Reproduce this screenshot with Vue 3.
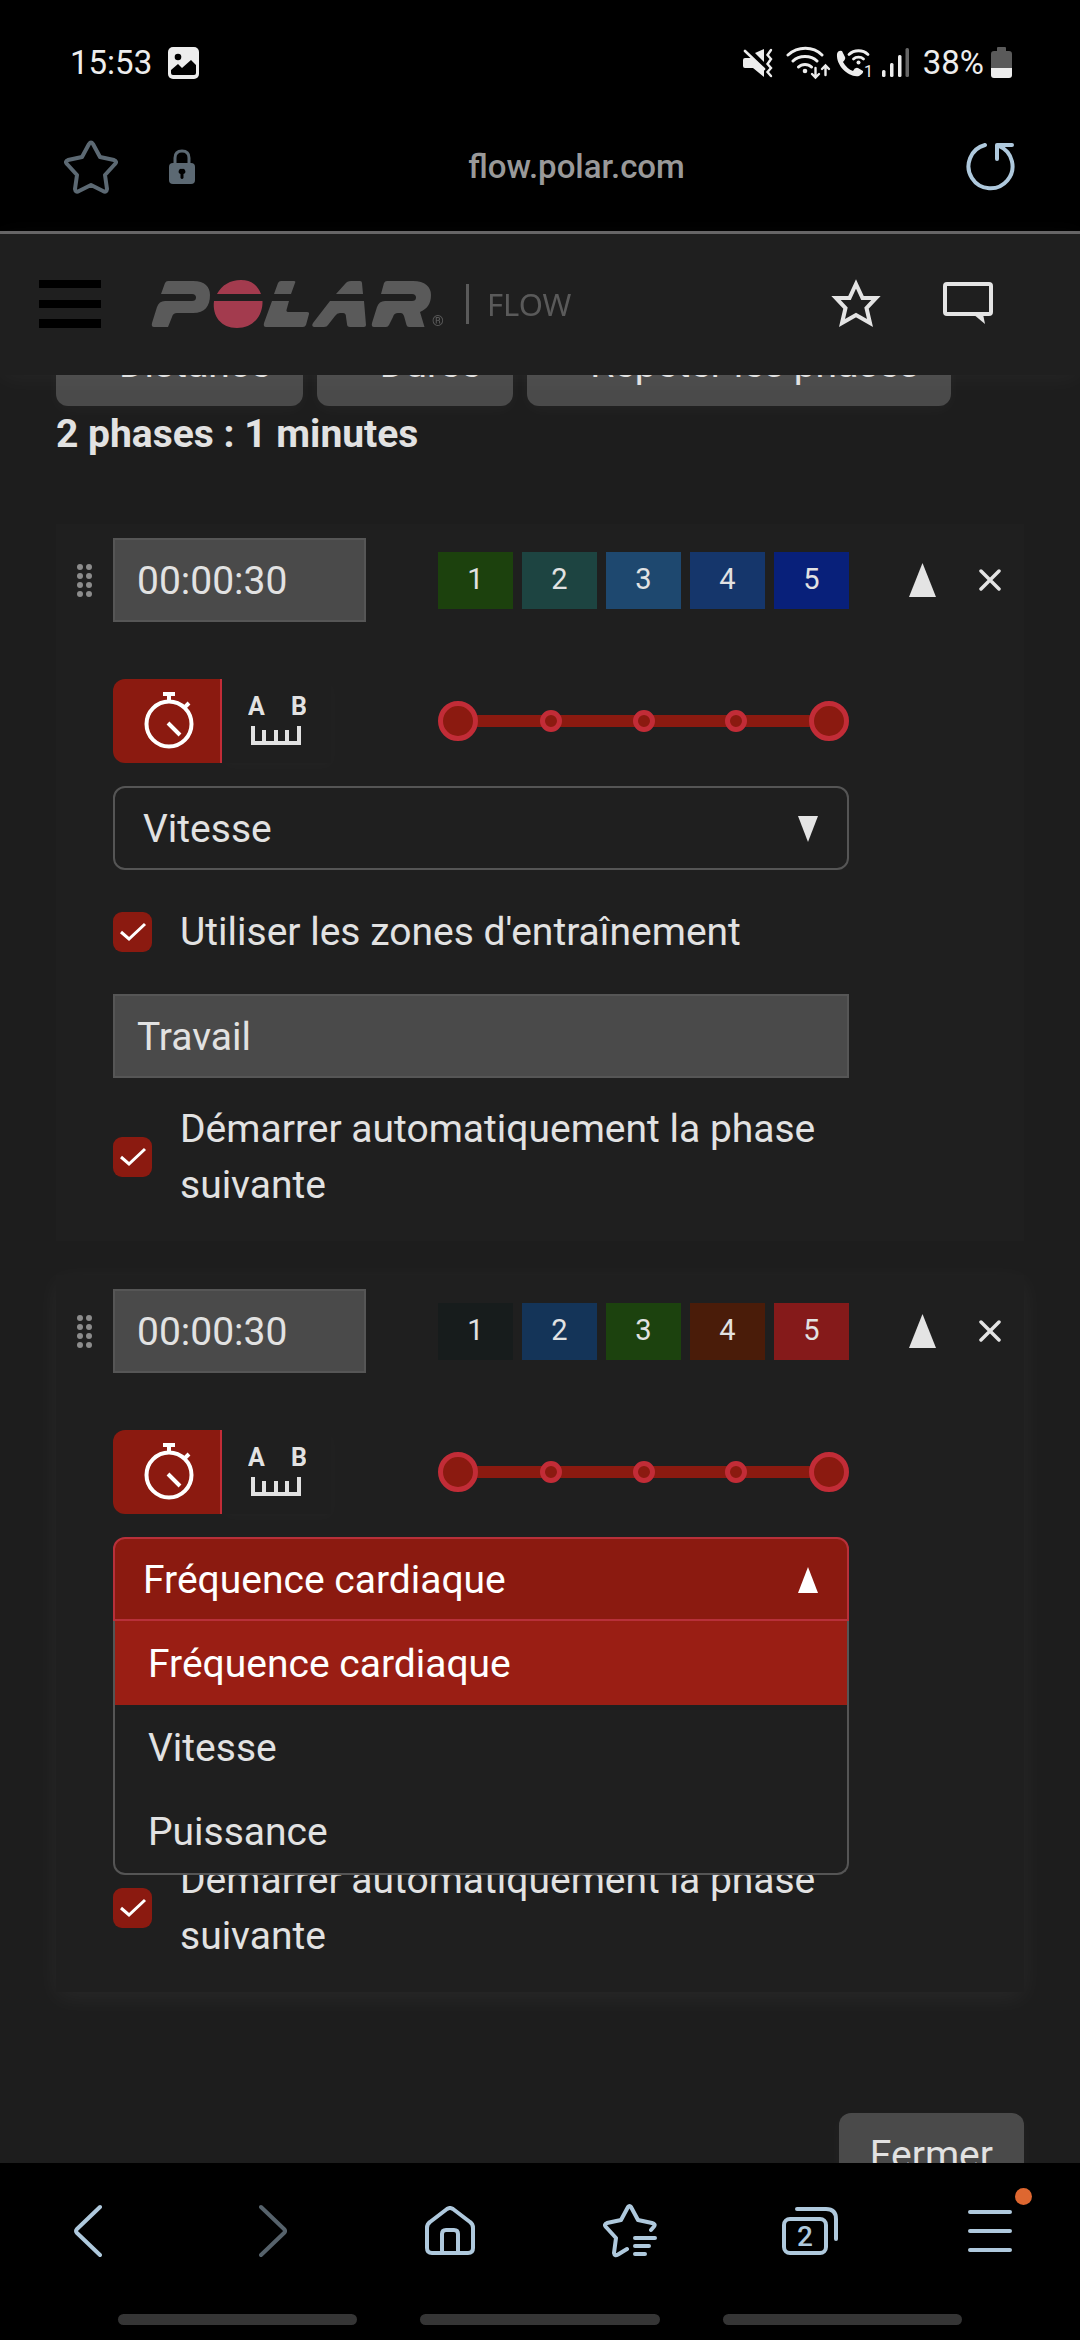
<script setup>
import { onMounted, reactive, ref } from 'vue'

const phaseTypes = ['Fréquence cardiaque', 'Vitesse', 'Puissance']
const addButtons = ['Distance', 'Durée', 'Répéter les phases']

const phases = reactive([
  {
    id: 1,
    duration: '00:00:30',
    name: 'Travail',
    type: 'Vitesse',
    open: false,
    zones: ['#1c410d', '#1d4441', '#1e486f', '#15366b', '#08207a'],
  },
  {
    id: 2,
    duration: '00:00:30',
    name: '',
    type: 'Fréquence cardiaque',
    open: true,
    zones: ['#171c1c', '#143458', '#1c420e', '#4a1c09', '#851a1a'],
  },
])

const scroller = ref(null)
onMounted(() => {
  scroller.value.scrollTop = 53
})
</script>

<template>
  <div class="screen">
    <div class="status">
      <span class="clock">15:53</span>
      <svg class="shot" width="31" height="32" viewBox="0 0 31 32">
        <rect width="31" height="32" rx="5" fill="#ededed" />
        <circle cx="10" cy="10" r="3.3" fill="#000" />
        <path d="M3 23L10 17L14 21L23 13L28 18V26Q28 28 26 28H5Q3 28 3 26Z" fill="#000" />
      </svg>
      <div class="indicators">
        <svg width="30" height="34" viewBox="0 0 30 34" fill="#ededed">
          <path d="M2 12H10L21 23V31L10 22H2Q0 22 0 20V14Q0 12 2 12ZM12 7L21 3V16Z" />
          <path d="M2 5L21 23" stroke="#ededed" stroke-width="2.6" stroke-linecap="round" />
          <path d="M28 4L24.500 9L28 13L24.500 18L28 22L24.500 26L28 30" fill="none" stroke="#ededed" stroke-width="2.400" stroke-linecap="round" />
        </svg>
        <svg class="wifi" width="45" height="34" viewBox="0 0 45 34" fill="none" stroke="#ededed" stroke-width="3" stroke-linecap="round">
          <path d="M2 9C12 0 27 0 36 9M7 15C13 9 25 9 31 15M12.500 21C16 17.500 22 17.500 25.500 21" />
          <circle cx="19" cy="25" r="2.300" fill="#ededed" stroke="none" />
          <path d="M29.500 22V31M26 28L29.500 31.500L33 28M39.500 29V20M36 23L39.500 19.500L43 23" stroke-width="2.400" />
        </svg>
        <svg width="36" height="34" viewBox="0 0 36 34" fill="none" stroke="#ededed" stroke-width="2.800" stroke-linecap="round">
          <path d="M1 8Q2 4 6 5L9 11Q10 13 7 16Q11 23 17 25Q19 21 22 22L27 25Q28 27 23 30C13 32 0 20 1 8Z" fill="#ededed" stroke="none" />
          <path d="M13 8.500C18 3.500 27 3.500 32 8.500M17.500 13C20 10.500 25 10.500 27.500 13" />
          <circle cx="22.500" cy="16.500" r="2" fill="#ededed" stroke="none" />
          <text x="28" y="31" class="sim">1</text>
        </svg>
        <svg class="signal" width="27" height="34" viewBox="0 0 27 34" fill="#ededed">
          <rect y="24" width="3.500" height="7" rx="1.500" />
          <rect x="8" y="17" width="3.500" height="14" rx="1.500" />
          <rect x="16" y="9" width="3.500" height="22" rx="1.500" />
          <rect x="23.500" y="2" width="3.500" height="29" rx="1.500" fill="#666" />
        </svg>
        <span class="level">38%</span>
        <svg width="21" height="34" viewBox="0 0 21 34">
          <path d="M6 2Q6 1 7 1H14Q15 1 15 2V5H18Q21 5 21 8V22H0V8Q0 5 3 5H6Z" fill="#5a5a5a" />
          <path d="M0 22H21V29Q21 32 18 32H3Q0 32 0 29Z" fill="#ededed" />
        </svg>
      </div>
    </div>

    <div class="address">
      <button class="plain" type="button" aria-label="Favori">
        <svg width="54" height="54" viewBox="0 0 54 54" fill="none" stroke="#5c6973" stroke-width="4" stroke-linejoin="round">
          <path d="M25 4Q27 1 29 4L36 17L50 20Q53.500 21.500 51 24L41 35L43 49Q42.500 53 39 51L27 45L15 51Q11.500 53 11 49L13 35L3 24Q0.500 21.500 4 20L18 17Z" />
        </svg>
      </button>
      <svg class="lock" width="26" height="36" viewBox="0 0 26 36">
        <path d="M6 15V9Q6 2 13 2T20 9V15" fill="none" stroke="#5c6973" stroke-width="3" />
        <rect y="14" width="26" height="21" rx="4" fill="#5c6973" />
        <path d="M13 20A2.500 2.500 0 0 1 14.500 25V29Q13 31 11.500 29V25A2.500 2.500 0 0 1 13 20Z" fill="#000" />
      </svg>
      <span class="url">flow.polar.com</span>
      <button class="plain reload" type="button" aria-label="Actualiser">
        <svg width="50" height="50" viewBox="0 0 50 50" fill="none" stroke="#afc9dd" stroke-width="4" stroke-linecap="round" stroke-linejoin="round">
          <path d="M20 3A22 22 0 1 0 34 4M47 3H32V17" />
        </svg>
      </button>
    </div>

    <header class="site">
      <button class="plain" type="button" aria-label="Menu">
        <svg width="62" height="48" viewBox="0 0 62 48">
          <path d="M0 0H62V8H0ZM0 20H62V28H0ZM0 39H62V48H0Z" />
        </svg>
      </button>
      <a class="brand" href="#" aria-label="Polar Flow">
        <svg width="296" height="48" viewBox="0 0 296 48" fill="#5a5a5a">
          <path d="M14 3Q15 1 17 1H42C54 1 59 7 59 15C59 26 54 33 42 33H26Q22 33 21 37L17 47H3Q0 47 1 43L6 27Q8 21 14 21H41Q45 21 45 17.500T41 14H10Z" />
          <path d="M66 14C71 5 79 0 90 0S107 6 110 14ZM63 21H111.500C112 36 102 48 86 48S61 36 63 21Z" fill="#a33b4e" />
          <path d="M127 3Q128 1 130 1H143Q145 1 144 3L140 14H123ZM121 21H138L135.500 30Q135 32 138 32H156Q158.500 32 158 34L155 45Q154 47 152 47H115Q112 47 113 43Z" />
          <path d="M194 4Q196 1 200 1H209Q211 1 211 3L212 14H185ZM179 21H213L215 45Q215 47 213 47H199Q196 47 196 44L195 37Q195 33 192 33H189Q186 33 184 36L177 45Q176 47 173 47H163Q160 46 162 43Z" />
          <path d="M233 3Q234 1 236 1H262C274 1 280 7 280 15C280 24 276 29 269 32L273.500 47H258Q256 47 255.500 45L253 36Q252 33 250 33H247Q243 33 242 37L238 45Q237 47 235 47H223Q220 47 221 43L226 27Q228 21 234 21H261Q265 21 265 17.500T261 14H230Z" />
          <text x="281" y="46" class="reg">®</text>
        </svg>
        <span class="product">FLOW</span>
      </a>
      <div class="tools">
        <button class="plain" type="button" aria-label="Favoris">
          <svg width="54" height="52" viewBox="0 0 54 52" fill="none" stroke="#e4e4e4" stroke-width="4">
            <path d="M27 6L33.500 20H47L37.500 30L41 45L27 37L13 45L16.500 30L7 20H20.500Z" />
          </svg>
        </button>
        <button class="plain" type="button" aria-label="Messages">
          <svg width="50" height="43" viewBox="0 0 50 43">
            <rect x="2" y="2" width="46" height="30" rx="2" fill="none" stroke="#e4e4e4" stroke-width="4" />
            <path d="M30 32H40L42 42Z" fill="#e4e4e4" />
          </svg>
        </button>
      </div>
    </header>

    <main ref="scroller" class="content">
      <div class="adders">
        <button v-for="label in addButtons" :key="label" class="grey" type="button">{{ label }}</button>
      </div>
      <h2 class="summary">2 phases : 1 minutes</h2>

      <section v-for="phase in phases" :key="phase.id" class="card" :class="{ lifted: phase.open }">
        <div class="grip">
          <svg width="15" height="33" viewBox="0 0 15 33" fill="#8c8c8c">
            <template v-for="y in [3, 12, 21, 30]" :key="y">
              <circle cx="3" :cy="y" r="3" />
              <circle cx="12" :cy="y" r="3" />
            </template>
          </svg>
        </div>

        <div class="fields">
          <div class="row">
            <input v-model="phase.duration" class="field time" type="text" aria-label="Durée" />
            <div class="zones">
              <span v-for="(color, i) in phase.zones" :key="i" class="zone" :style="{ background: color }">{{ i + 1 }}</span>
            </div>
          </div>

          <div class="row measure">
            <div class="toggle">
              <label class="option">
                <input type="radio" :name="'measure' + phase.id" checked aria-label="Durée" />
                <svg width="52" height="58" viewBox="0 0 52 58" fill="none" stroke="#fff" stroke-width="4">
                  <circle cx="26" cy="32" r="22.500" />
                  <path d="M20 2H32M26 2V9M41 16L46 11M25 31L37 43" />
                </svg>
              </label>
              <label class="option">
                <input type="radio" :name="'measure' + phase.id" aria-label="Distance" />
                <svg width="58" height="58" viewBox="0 0 58 58">
                  <text x="0" y="23" class="mark">A</text>
                  <text x="43" y="23" class="mark">B</text>
                  <path d="M5 34V51H51V34M16 38V51M28 38V51M39 38V51" fill="none" stroke="#e2e2e2" stroke-width="4" />
                </svg>
              </label>
            </div>
            <div class="range">
              <div class="track"></div>
              <div class="ticks"><i></i><i></i><i></i></div>
              <input type="range" min="1" max="5" value="1" aria-label="Zone minimale" />
              <input type="range" min="1" max="5" value="5" aria-label="Zone maximale" />
            </div>
          </div>

          <div class="picker" :class="{ open: phase.open }">
            <select v-model="phase.type" aria-label="Type de zone">
              <option v-for="type in phaseTypes" :key="type">{{ type }}</option>
            </select>
            <svg class="caret" width="20" height="26" viewBox="0 0 20 26">
              <path :d="phase.open ? 'M10 0L20 26H0Z' : 'M0 0H20L10 26Z'" />
            </svg>
            <ul v-if="phase.open" class="menu">
              <li v-for="type in phaseTypes" :key="type" :class="{ current: type === phase.type }">{{ type }}</li>
            </ul>
          </div>

          <label class="check zones-check" :class="{ covered: phase.open }">
            <span class="box">
              <input type="checkbox" checked />
              <svg width="28" height="20" viewBox="0 0 28 20"><path d="M2 10L10 17L26 2" /></svg>
            </span>
            Utiliser les zones d'entraînement
          </label>

          <input v-model="phase.name" class="field" :class="{ covered: phase.open }" type="text" aria-label="Nom de la phase" />

          <label class="check">
            <span class="box">
              <input type="checkbox" checked />
              <svg width="28" height="20" viewBox="0 0 28 20"><path d="M2 10L10 17L26 2" /></svg>
            </span>
            Démarrer automatiquement la phase suivante
          </label>
        </div>

        <div class="actions">
          <button class="plain" type="button" aria-label="Réduire">
            <svg width="27" height="34" viewBox="0 0 27 34"><path d="M13.500 0L27 34H0Z" fill="#e4e4e4" /></svg>
          </button>
          <button class="plain" type="button" aria-label="Supprimer">
            <svg width="22" height="22" viewBox="0 0 22 22"><path d="M2 2L20 20M20 2L2 20" stroke="#e4e4e4" stroke-width="3.500" stroke-linecap="round" /></svg>
          </button>
        </div>
      </section>

      <div class="footer">
        <button class="grey" type="button">Fermer</button>
      </div>
    </main>

    <nav class="browser">
      <div class="keys">
        <button class="plain back" type="button" aria-label="Retour">
          <svg width="28" height="54" viewBox="0 0 28 54"><path d="M26 3L3 25Q1 27 3 29L26 51" /></svg>
        </button>
        <button class="plain forward" type="button" aria-label="Suivant">
          <svg width="28" height="54" viewBox="0 0 28 54"><path d="M2 3L25 25Q27 27 25 29L2 51" /></svg>
        </button>
        <button class="plain" type="button" aria-label="Accueil">
          <svg width="50" height="50" viewBox="0 0 50 50">
            <path d="M22 3Q25 1 28 3L45 16Q48 18 48 22V42Q48 47 43 47H7Q2 47 2 42V22Q2 18 5 16ZM17 47V28Q17 24 21 24H29Q33 24 33 28V47" />
          </svg>
        </button>
        <button class="plain" type="button" aria-label="Liste des favoris">
          <svg width="54" height="54" viewBox="0 0 54 54">
            <path d="M48 26L51 22.500Q53 20 49 19L35 16L28 3Q26.500 1 25 3L18 16L4 19Q0.500 20.500 3 23L13 34L11 49Q11.500 52.500 15 50.500L24 45M32 34H52M32 42H46M32 50H42" />
          </svg>
        </button>
        <button class="plain" type="button" aria-label="Onglets">
          <svg width="56" height="50" viewBox="0 0 56 50">
            <path d="M15 3H44Q54 3 54 13V33" />
            <rect x="2" y="13" width="42" height="34" rx="6" />
            <text x="23" y="40" text-anchor="middle" class="tabs">2</text>
          </svg>
        </button>
        <button class="plain more" type="button" aria-label="Plus">
          <svg width="44" height="44" viewBox="0 0 44 44"><path d="M2 3H42M2 22H42M2 41H42" /></svg>
          <span class="dot"></span>
        </button>
      </div>
      <div class="gestures"><span></span><span></span><span></span></div>
    </nav>
  </div>
</template>

<style>
body {
  background: #000;
}
</style>

<style scoped>
* {
  box-sizing: border-box;
}

.screen {
  display: flex;
  flex-direction: column;
  height: 100vh;
  background: #000;
  color: #e2e2e2;
  font-family: Roboto, "Liberation Sans", sans-serif;
  font-size: 39px;
  line-height: 56px;
}

svg {
  display: block;
  flex: none;
}

input,
select,
button {
  margin: 0;
  font: inherit;
  color: inherit;
}

.plain {
  display: block;
  padding: 0;
  border: 0;
  background: none;
}

.status {
  display: flex;
  align-items: center;
  padding: 43px 68px 19px 70px;
  font-size: 33px;
  line-height: 40px;
  color: #ededed;
}

.shot {
  margin-left: 16px;
}

.indicators {
  display: flex;
  align-items: center;
  margin-left: auto;
}

.wifi {
  margin: 0 5px 0 13px;
}

.sim {
  font-size: 16px;
  fill: #ededed;
  stroke: none;
}

.signal {
  margin-left: 10px;
}

.level {
  margin: 0 7px 0 14px;
}

.address {
  display: grid;
  grid-template-columns: 1fr auto 1fr;
  align-items: center;
  grid-auto-flow: column;
  height: 132px;
  padding: 0 65px 0 64px;
  border-bottom: 3px solid #656465;
}

.address > .plain,
.lock {
  grid-row: 1;
  grid-column: 1;
}

.lock {
  margin-left: 105px;
}

.url {
  grid-column: 2;
  padding-left: 74px;
  font-size: 33px;
  font-weight: 500;
  line-height: 40px;
  color: #999;
}

.address > .reload {
  grid-column: 3;
  justify-self: end;
}

.site {
  position: relative;
  z-index: 2;
  display: flex;
  align-items: center;
  flex: none;
  height: 141px;
  padding: 0 87px 2px 39px;
  background: #1f1f1f;
  box-shadow: 0 4px 24px rgba(255, 255, 255, 0.04);
}

.brand {
  display: flex;
  align-items: center;
  margin-left: 50px;
  color: #5a5a5a;
  text-decoration: none;
}

.reg {
  font-size: 15px;
}

.product {
  margin-left: 19px;
  padding-left: 18px;
  border-left: 3px solid #5a5a5a;
  font-family: "Noto Sans", sans-serif;
  font-size: 31px;
  line-height: 40px;
}

.tools {
  display: flex;
  align-items: center;
  gap: 60px;
  margin-left: auto;
}

.content {
  flex: 1;
  min-height: 0;
  padding: 0 56px 40px;
  overflow-y: auto;
  scrollbar-width: none;
  background: #1d1d1d;
}

.adders {
  display: flex;
  gap: 14px;
}

.grey {
  height: 84px;
  padding: 0 31px;
  border: 0;
  border-radius: 12px;
  background: #4a4a4a;
  box-shadow: 0 4px 16px rgba(255, 255, 255, 0.03);
  white-space: nowrap;
}

.adders .grey {
  padding: 0 32px 0 63px;
}

.summary {
  margin: 0 0 62px;
  font-size: 39px;
  font-weight: 700;
}

.card {
  display: grid;
  grid-template-columns: 57px minmax(0, 1fr) 175px;
  margin-bottom: 34px;
  padding: 14px 0 28px;
  background: #1f1f1f;
}

.lifted {
  box-shadow: 0 6px 24px rgba(255, 255, 255, 0.05);
}

.grip,
.actions {
  display: flex;
  align-items: center;
  height: 84px;
}

.grip {
  justify-content: center;
}

.actions {
  gap: 43px;
  padding-left: 60px;
}

.fields {
  display: flex;
  flex-direction: column;
}

.row {
  display: flex;
  align-items: center;
  justify-content: space-between;
}

.field {
  width: 100%;
  height: 84px;
  padding: 2px 22px 0;
  border: 2px solid #565656;
  border-radius: 0;
  background: #4a4a4a;
}

.time {
  width: 253px;
}

.zones {
  display: grid;
  grid-template-columns: repeat(5, 1fr);
  gap: 9px;
  width: 411px;
}

.zone {
  height: 57px;
  font-size: 29px;
  line-height: 54px;
  text-align: center;
}

.measure {
  margin: 57px 0 23px;
}

.toggle {
  display: flex;
}

.option {
  display: grid;
  place-items: center;
  width: 109px;
  height: 84px;
}

.option > * {
  grid-area: 1 / 1;
}

.option input {
  appearance: none;
  width: 1px;
  height: 1px;
}

.option:first-child {
  padding-left: 4px;
  border-right: 2px solid #c22c37;
  border-radius: 12px 0 0 12px;
  background: #8b1a10;
}

.option:last-child {
  box-shadow: 2px 4px 12px rgba(255, 255, 255, 0.02);
}

.mark {
  font-size: 25px;
  font-weight: 700;
  fill: #e2e2e2;
}

.range {
  position: relative;
  width: 411px;
  height: 40px;
}

.track {
  position: absolute;
  inset: 14px 20px;
  background: #8b1a10;
}

.ticks {
  position: relative;
  display: flex;
  justify-content: space-between;
  align-items: center;
  height: 40px;
  padding: 0 102px;
}

.ticks i {
  width: 22px;
  height: 22px;
  border: 5px solid #c22c37;
  border-radius: 50%;
  background: #8b1a10;
}

.range input {
  position: absolute;
  inset: 0;
  width: 100%;
  height: 40px;
  appearance: none;
  background: none;
  pointer-events: none;
}

.range input::-webkit-slider-thumb {
  appearance: none;
  width: 40px;
  height: 40px;
  border: 5px solid #c22c37;
  border-radius: 50%;
  background: #8b1a10;
  pointer-events: auto;
}

.picker {
  position: relative;
}

.picker select {
  display: block;
  width: 100%;
  height: 84px;
  padding: 2px 28px 0;
  border: 2px solid #555;
  border-radius: 12px;
  background: #1f1f1f;
  appearance: none;
}

.caret {
  position: absolute;
  top: 30px;
  right: 31px;
  fill: #e4e4e4;
  pointer-events: none;
}

.picker.open select {
  border-color: #b8303a;
  border-radius: 12px 12px 0 0;
  background: #8b1a10;
  color: #fff;
}

.open .caret {
  fill: #fff;
}

.menu {
  position: absolute;
  z-index: 1;
  top: 100%;
  left: 0;
  right: 0;
  margin: 0;
  padding: 0;
  border: 2px solid #555;
  border-top: 0;
  border-radius: 0 0 12px 12px;
  background: #1f1f1f;
  list-style: none;
}

.menu li {
  padding: 15px 33px 13px;
}

.menu .current {
  background: #9a1e14;
  color: #fff;
}

.check {
  display: flex;
  align-items: center;
  gap: 28px;
  margin-top: 23px;
}

.zones-check {
  margin: 34px 0;
}

/* Fields behind an open menu must not take focus */
.covered {
  visibility: hidden;
}

.box {
  display: grid;
  flex: none;
  place-items: center;
}

.box > * {
  grid-area: 1 / 1;
}

.box input {
  width: 39px;
  height: 40px;
  border-radius: 9px;
  background: #8b1a10;
  appearance: none;
}

.box svg {
  fill: none;
  stroke: #fff;
  stroke-width: 3;
}

.footer {
  display: flex;
  justify-content: flex-end;
  margin-top: 121px;
}

.browser {
  position: relative;
  flex: none;
  height: 177px;
  padding-top: 33px;
}

.keys {
  display: grid;
  grid-template-columns: repeat(6, 1fr);
  align-items: center;
  justify-items: center;
  height: 70px;
}

.keys svg {
  fill: none;
  stroke: #afc9dd;
  stroke-width: 4;
  stroke-linecap: round;
  stroke-linejoin: round;
}

.keys .back {
  padding-right: 5px;
}

.keys .forward {
  padding-left: 5px;
}

.keys .forward svg {
  stroke: #56626b;
}

.keys .tabs {
  fill: #afc9dd;
  stroke: none;
  font-size: 28px;
  font-weight: 500;
}

.more {
  position: relative;
}

.dot {
  position: absolute;
  top: -21px;
  right: -20px;
  width: 17px;
  height: 17px;
  border-radius: 50%;
  background: #de6730;
}

.gestures {
  display: grid;
  grid-template-columns: repeat(3, 1fr);
  gap: 63px;
  margin: 48px 118px 0;
}

.gestures span {
  height: 11px;
  border-radius: 6px;
  background: #353535;
}
</style>
